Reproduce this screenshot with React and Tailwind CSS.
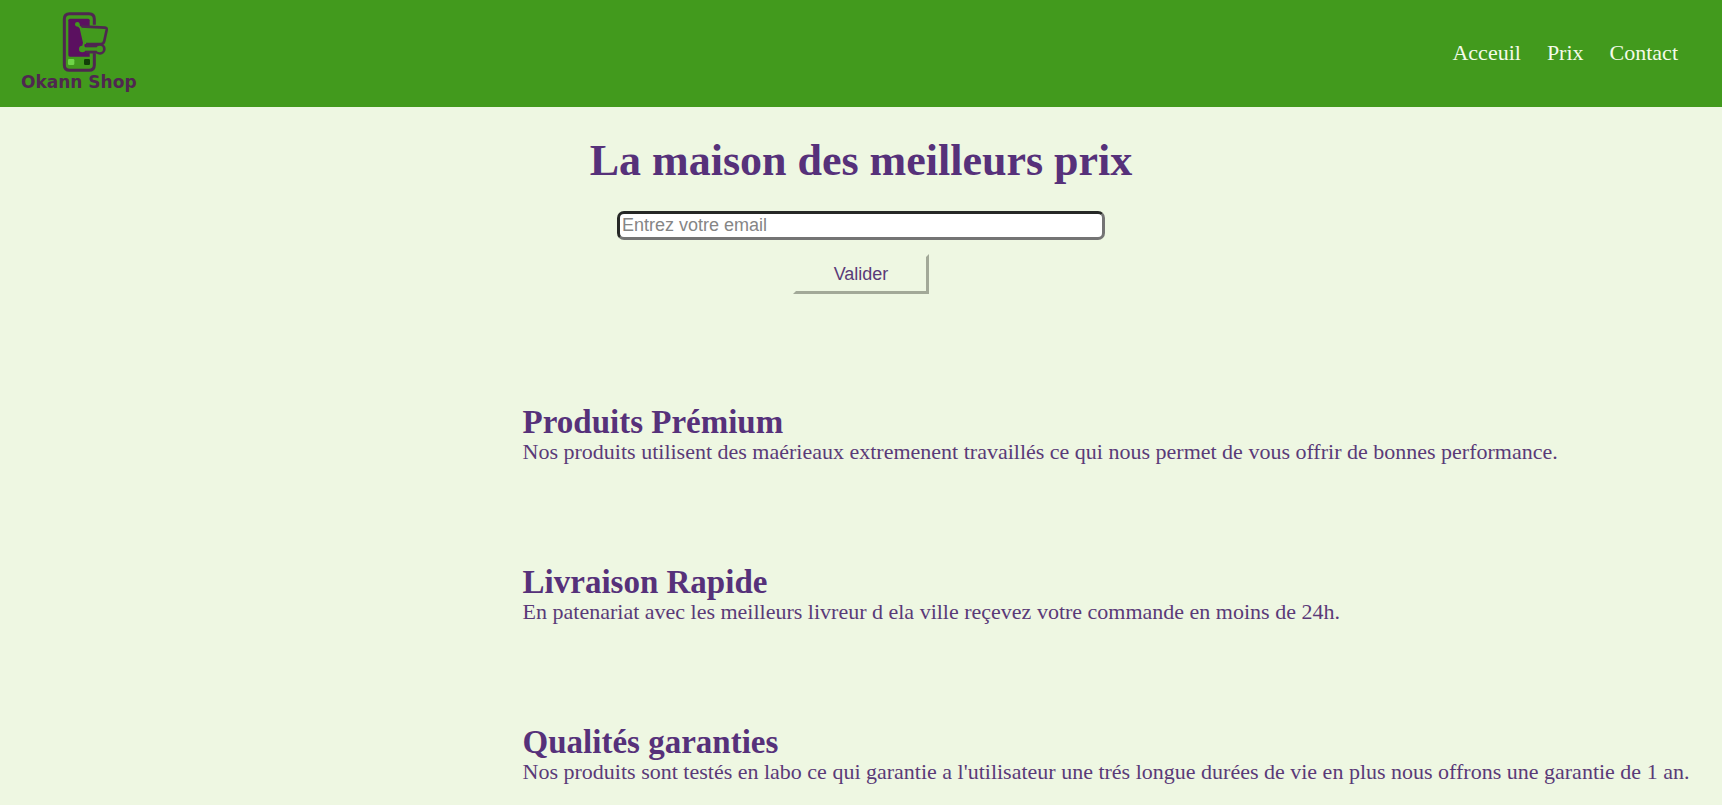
import React from "react";

const links = ["Acceuil", "Prix", "Contact"];

const features = [
  {
    title: "Produits Prémium",
    text: "Nos produits utilisent des maérieaux extremenent travaillés ce qui nous permet de vous offrir de bonnes performance.",
  },
  {
    title: "Livraison Rapide",
    text: "En patenariat avec les meilleurs livreur d ela ville reçevez votre commande en moins de 24h.",
  },
  {
    title: "Qualités garanties",
    text: "Nos produits sont testés en labo ce qui garantie a l'utilisateur une trés longue durées de vie en plus nous offrons une garantie de 1 an.",
  },
];

function Logo() {
  return (
    <a href="#accueil" className="flex flex-col items-center text-[#4f2750]">
      <svg
        className="ml-3.5"
        width="48"
        height="64"
        viewBox="0 0 144 192"
        fill="none"
        aria-hidden="true"
      >
        {/* phone body and screen */}
        <path
          d="M97 44V27Q97 11 81 11H23Q7 11 7 27V165Q7 181 23 181H81Q97 181 97 165V130"
          stroke="currentColor"
          strokeWidth="9"
        />
        <path d="M24 26H78Q83 26 83 31V140H24Q19 140 19 135V31Q19 26 24 26Z" fill="#5b1060" />
        {/* cart basket */}
        <path
          d="M56 49L129 53Q135 54 134 60L127 92Q125 102 117 102H68Z"
          fill="#429a1d"
        />
        <path
          d="M56 49L129 53Q135 54 134 60L127 92Q125 102 117 102H72"
          stroke="currentColor"
          strokeWidth="8"
          strokeLinejoin="round"
        />
        {/* handle */}
        <circle cx="46" cy="43" r="7" fill="#429a1d" />
        <path
          d="M46 43L56 54L66 98L62 116"
          stroke="#429a1d"
          strokeWidth="6"
          strokeLinecap="round"
          strokeLinejoin="round"
        />
        {/* axle and wheels */}
        <circle cx="114" cy="117" r="17" fill="currentColor" />
        <path d="M72 117H114" stroke="currentColor" strokeWidth="27" />
        <path d="M62 117H114" stroke="#429a1d" strokeWidth="10" />
        <circle cx="61" cy="117" r="10" fill="#429a1d" />
        <circle cx="113" cy="117" r="10" fill="#429a1d" />
        {/* phone keys */}
        <rect x="18" y="147" width="19" height="18" rx="4" fill="#6fd548" />
        <rect x="66" y="147" width="18" height="18" rx="4" fill="#123f08" />
      </svg>
      <span className="-mt-0.5 font-['DejaVu_Sans',sans-serif] text-[17px] leading-5 font-bold">
        Okann Shop
      </span>
    </a>
  );
}

export default function App() {
  return (
    <div className="min-h-screen overflow-hidden bg-[#eef7e2] font-['Liberation_Serif',serif] text-[22px] text-[#56317a]">
      <header className="flex h-[107px] items-start justify-between bg-[#429a1d] pt-2.5 pr-11 pl-[21px]">
        <Logo />
        <nav className="flex gap-[26px] pt-[31px] leading-6 text-[#f4fbe9]">
          {links.map((label) => (
            <a key={label} href={`#${label.toLowerCase()}`}>
              {label}
            </a>
          ))}
        </nav>
      </header>

      <main>
        <form className="flex flex-col items-center pt-[30px]" onSubmit={(e) => e.preventDefault()}>
          <h1 className="text-[44px] leading-12 font-bold">La maison des meilleurs prix</h1>
          <input
            type="email"
            aria-label="Entrez votre email"
            placeholder="Entrez votre email"
            className="mt-[26px] h-[29px] w-[488px] max-w-full rounded-[7px] border-3 border-t-[#262826] border-r-[#747474] border-b-[#747474] border-l-[#262826] bg-white px-0.5 font-['Liberation_Sans',sans-serif] text-[18px] leading-5 placeholder:text-[#858585]"
          />
          <button
            type="submit"
            className="mt-3.5 h-10 w-[136px] border-3 border-t-transparent border-r-[#a2a998] border-b-[#a2a998] border-l-transparent font-['Liberation_Sans',sans-serif] text-[18px] leading-5 text-[#5a3a78]"
          >
            Valider
          </button>
        </form>

        <section className="flex flex-col gap-25 pt-27.5 pl-[30%]">
          {features.map(({ title, text }) => (
            <article key={title} className="pl-1.5">
              <h2 className="text-[33px] leading-9 font-bold">{title}</h2>
              <p className="leading-6 text-[#5a3a78]">{text}</p>
            </article>
          ))}
        </section>
      </main>
    </div>
  );
}
